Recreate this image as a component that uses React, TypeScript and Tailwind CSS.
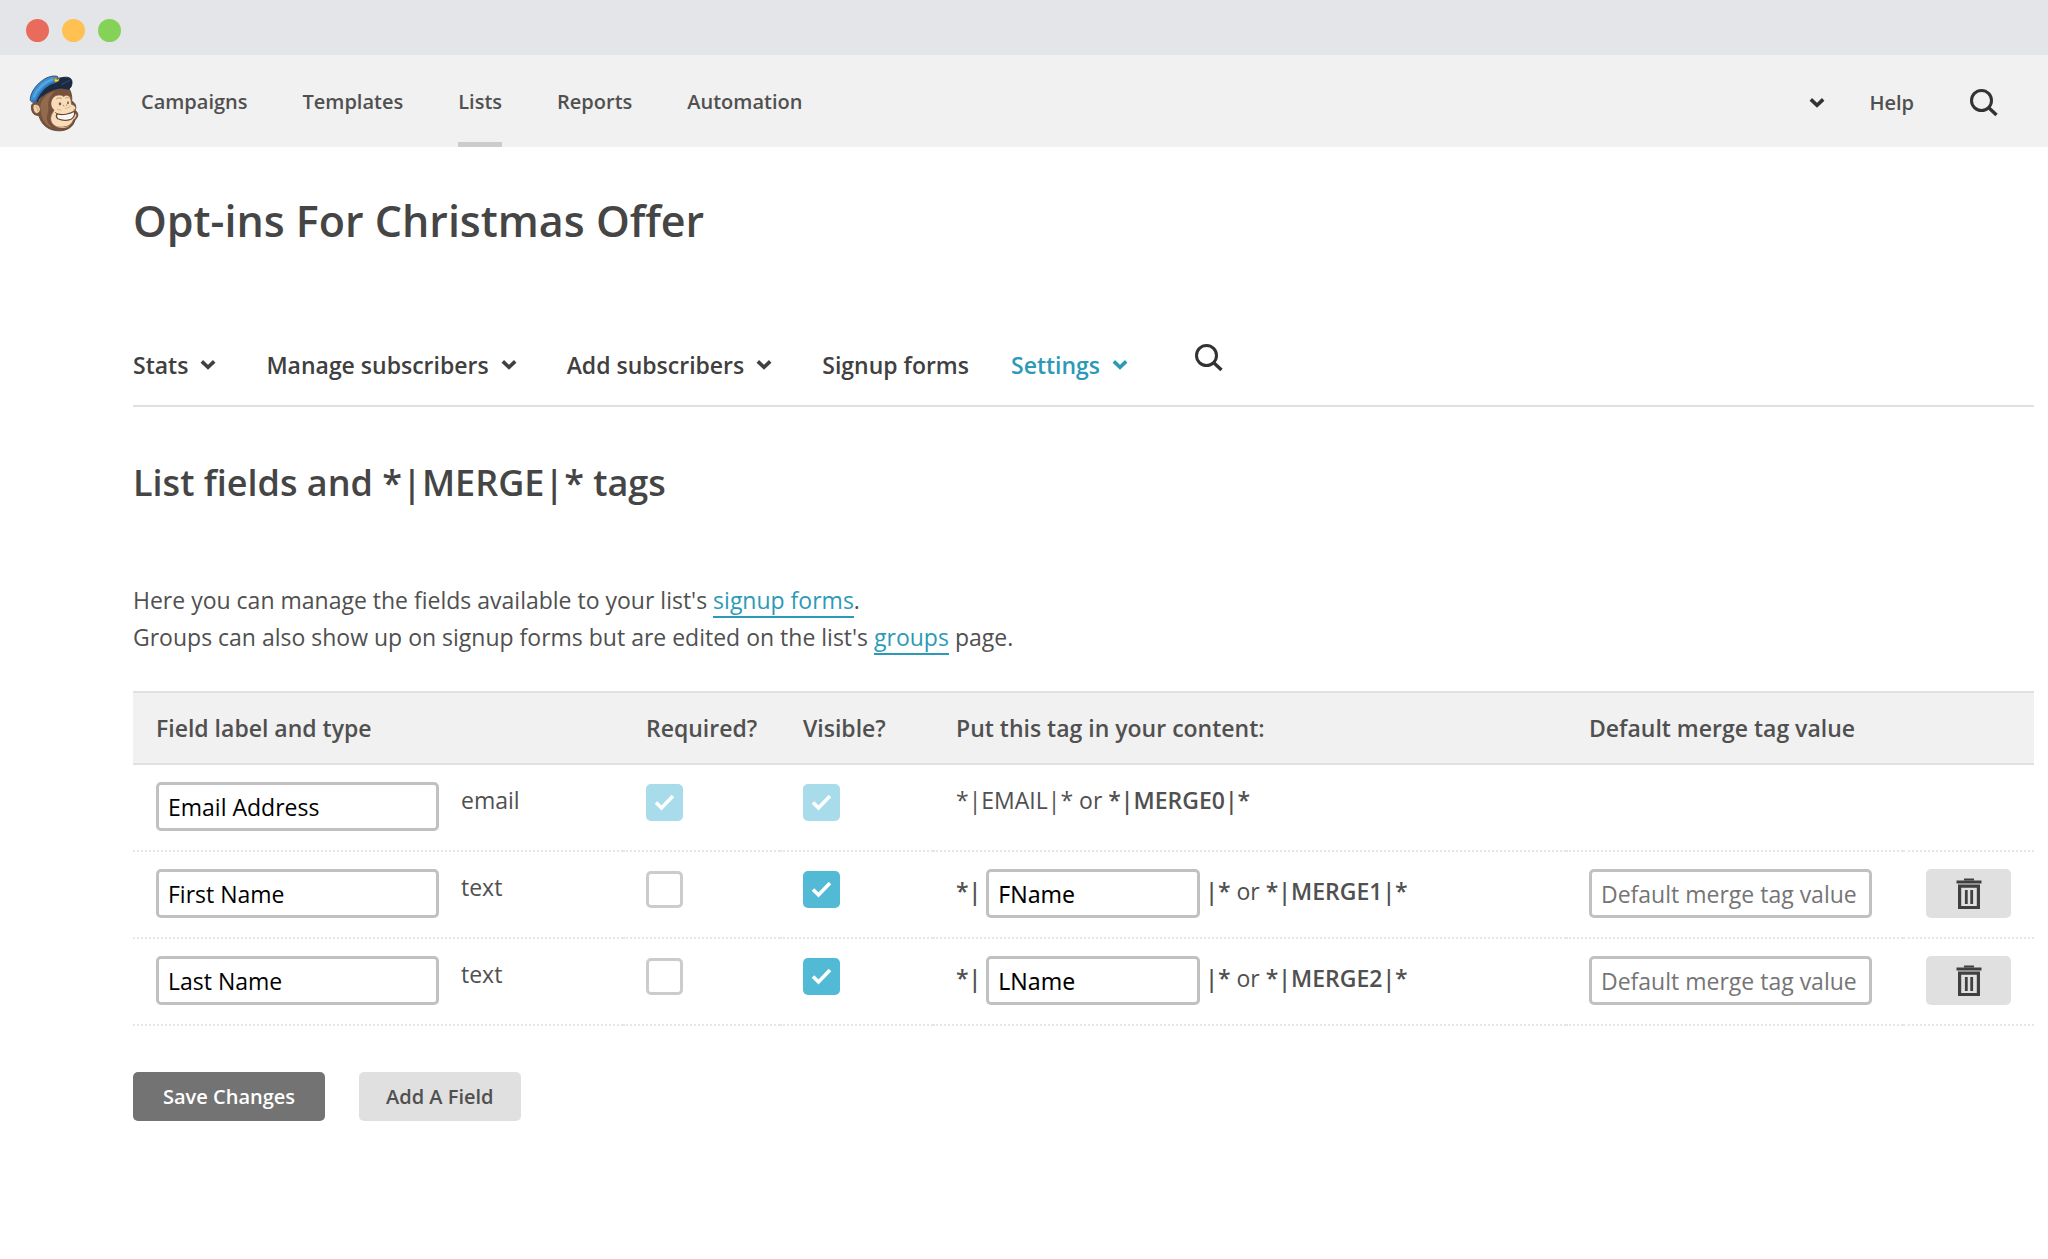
import React, { useState } from 'react';

type Field = {
  id: string;
  label: string;
  type: string;
  required: boolean;
  visible: boolean;
  locked: boolean;
  tag: string;
  merge: string;
};

const initialFields: Field[] = [
  { id: 'email', label: 'Email Address', type: 'email', required: true, visible: true, locked: true, tag: 'EMAIL', merge: 'MERGE0' },
  { id: 'fname', label: 'First Name', type: 'text', required: false, visible: true, locked: false, tag: 'FName', merge: 'MERGE1' },
  { id: 'lname', label: 'Last Name', type: 'text', required: false, visible: true, locked: false, tag: 'LName', merge: 'MERGE2' },
];

const mainLinks = ['Campaigns', 'Templates', 'Lists', 'Reports', 'Automation'];

const inputClass =
  'h-[49px] rounded-[5px] border-[3px] border-[#c1c1c1] bg-white px-[9px] text-[23px] leading-8 text-black outline-none placeholder:text-[#757575] placeholder:opacity-100 focus:border-[#52bad5]';

const Chevron = () => (
  <svg width="16" height="12" viewBox="0 0 16 12" fill="none" stroke="currentColor" strokeWidth="3.6" aria-hidden="true">
    <path d="M1.8 2.4 8 8.2l6.2-5.8" />
  </svg>
);

const SearchIcon = () => (
  <svg width="30" height="30" viewBox="0 0 30 30" fill="none" stroke="currentColor" strokeWidth="3" aria-hidden="true">
    <circle cx="12.5" cy="12.5" r="10" />
    <path d="m19.5 19.5 8 7.5" strokeWidth="3.4" />
  </svg>
);

const TrashIcon = () => (
  <svg width="26" height="32" viewBox="0 0 26 32" fill="none" stroke="#404040" aria-hidden="true">
    <path d="M8 1.5h10" strokeWidth="2" />
    <path d="M0.5 4h25" strokeWidth="3" />
    <path d="M3.6 8.2h18.8v21.3H3.6z" strokeWidth="3.2" />
    <path d="M10.3 12v14M15.7 12v14" strokeWidth="2.8" />
  </svg>
);

const Logo = () => (
  <svg width="50" height="57" viewBox="0 0 150 170" aria-hidden="true">
    {/* head */}
    <path
      d="M14 84C4 86 6 108 14 116c5 5 12 4 16 6 6 24 26 44 58 45 28 0 44-12 50-32 6-6 11-14 7-22-2-4-5-5-7-8 6-10 0-24-10-27C130 60 124 40 112 32L58 42 30 76z"
      fill="#75513e"
      stroke="#5a3f31"
      strokeWidth="2.5"
    />
    <path d="M34 90c4-20 20-36 44-42-16 14-22 30-20 48 2 14-6 24-4 38 2 10 8 18 16 24-22-8-36-28-36-68z" fill="#946a4c" />
    {/* ear */}
    <path d="M15 88c-6 4-3 22 5 26 6 3 12-2 14-10 1-10-10-20-19-16z" fill="#f1d3ad" stroke="#7b523a" strokeWidth="3" />
    <path d="M20 94c6 2 8 8 6 14" fill="none" stroke="#c79d73" strokeWidth="3" />
    {/* face */}
    <path
      d="M74 66c8-8 22-8 30-2 8-6 16-4 20 4 3 8 2 14 4 20 10 2 15 10 10 18-3 6-2 8 3 10 4 4-2 16-8 18-4 14-16 22-38 22-20 0-30-12-30-26 0-12 8-18 10-26-12-8-12-28-1-38z"
      fill="#f8ddb8"
      stroke="#7d5842"
      strokeWidth="2"
    />
    <path d="M76 148c10 10 34 10 46 2-8 12-38 12-46-2z" fill="#dcb68a" />
    {/* eyes and brows */}
    <path d="M82 72c5-5 12-5 16 0M109 70c4-4 9-4 12 0" fill="none" stroke="#cfa67c" strokeWidth="3.5" />
    <ellipse cx="93" cy="86" rx="4" ry="5" fill="#7d6254" />
    <ellipse cx="117" cy="83" rx="3" ry="4.5" fill="#7d6254" />
    <path d="M103 89l2 5M112 88l1 4" stroke="#8a6650" strokeWidth="2" />
    <path d="M84 100c4 4 8 5 13 4M108 100c6-1 12-3 18-8" fill="none" stroke="#dcb68a" strokeWidth="3" />
    {/* smile */}
    <path
      d="M84 116c16 5 38 1 52-8 3 9-1 20-10 24-12 5-30 3-40-1-4-4-5-10-2-15z"
      fill="#fff"
      stroke="#6a4735"
      strokeWidth="3.5"
    />
    <path d="M88 126c16 3 32 1 46-8" fill="none" stroke="#e2dad3" strokeWidth="1.5" />
    <path d="M79 112c4 1 6 4 5 8M134 104c4 0 6 3 7 6" fill="none" stroke="#6a4735" strokeWidth="3" />
    {/* cap */}
    <path d="M24 80C36 62 56 48 84 40c12-3 22 0 34 2 8-2 12-14 11-24-2-9-9-12-19-12-8 0-16 2-24 4L54 26 24 62z" fill="#1c2a44" stroke="#14203a" strokeWidth="2.5" />
    <path d="M4 76C2 62 14 34 40 16 56 4 74 0 86 4c2 6 2 10-2 14C58 26 36 44 22 78c-6 6-14 4-18-2z" fill="#3c8fd0" stroke="#1f3e66" strokeWidth="2.5" />
    <path d="M14 66C24 42 46 20 76 10" fill="none" stroke="#58a7e0" strokeWidth="6" />
    <path d="M9 76c4 2 7 2 11 0C34 44 56 26 84 19" fill="none" stroke="#2b74b5" strokeWidth="4" />
    <path d="M98 28c10-6 20-10 26-14" fill="none" stroke="#3b4d6d" strokeWidth="3" />
    <path d="M71 7l7 7 1-8 5 8 7-5-2 9-10 3z" fill="#ffd93b" stroke="#80691c" strokeWidth="1.5" />
  </svg>
);

type CheckboxProps = {
  label: string;
  checked: boolean;
  disabled: boolean;
  onChange: () => void;
};

const Checkbox = ({ label, checked, disabled, onChange }: CheckboxProps) => (
  <label className="relative mt-0.5 block size-[37px]">
    <input
      type="checkbox"
      aria-label={label}
      checked={checked}
      disabled={disabled}
      onChange={onChange}
      className="block size-full appearance-none rounded-[5px] border-[3px] border-[#cccccc] bg-white checked:border-0 checked:bg-[#52bad5] checked:disabled:bg-[#a8dcea]"
    />
    {checked && (
      <svg className="pointer-events-none absolute inset-0" width="37" height="37" viewBox="0 0 37 37" fill="none" stroke="#fff" strokeWidth="3.6" aria-hidden="true">
        <path d="M10 18.5 15.5 24 27 12" />
      </svg>
    )}
  </label>
);

const App = () => {
  const [fields, setFields] = useState(initialFields);

  const update = (id: string, patch: Partial<Field>) => {
    setFields(fields.map((f) => (f.id === id ? { ...f, ...patch } : f)));
  };

  const remove = (id: string) => {
    setFields(fields.filter((f) => f.id !== id));
  };

  return (
    <div className="min-h-screen bg-white font-['Open_Sans',sans-serif] text-[#454545]">
      <div className="flex h-[55px] items-center gap-[13px] bg-[#e3e5e9] px-[26px] pt-[5px]">
        <span className="size-[23px] rounded-full bg-[#e96b5b]"></span>
        <span className="size-[23px] rounded-full bg-[#ffc152]"></span>
        <span className="size-[23px] rounded-full bg-[#84d257]"></span>
      </div>

      <header className="flex h-[92px] items-center bg-[#f1f1f1] pl-[29px] pr-[49px]">
        <a href="#" aria-label="Home" className="pt-1">
          <Logo />
        </a>
        <nav className="ml-[62px] flex h-full gap-[55px] text-xl font-semibold text-[#505050]">
          {mainLinks.map((link) => (
            <a
              key={link}
              href="#"
              className={
                link === 'Lists'
                  ? 'flex items-center border-b-[5px] border-[#cccccc] pt-1.5'
                  : 'flex items-center border-b-[5px] border-transparent pt-1.5'
              }
            >
              {link}
            </a>
          ))}
        </nav>
        <div className="ml-auto flex items-center pt-1 text-xl font-semibold">
          <button type="button" aria-label="Account menu" className="mr-11 text-[#333333]">
            <Chevron />
          </button>
          <a href="#" className="mr-[55px] text-[#505050]">Help</a>
          <button type="button" aria-label="Search" className="text-[#333333]">
            <SearchIcon />
          </button>
        </div>
      </header>

      <main className="pl-[133px] pr-3.5">
        <h1 className="pt-[42px] text-[43px] leading-16 font-semibold text-[#454545]">Opt-ins For Christmas Offer</h1>

        <nav className="mt-[76px] flex h-[78px] items-start border-b-2 border-[#e0e0e0] pt-3.5 text-[23px] leading-8 font-semibold text-[#404040]">
          <div className="flex gap-[50px] pt-1.5">
            <a href="#" className="flex items-center gap-3">Stats <Chevron /></a>
            <a href="#" className="flex items-center gap-3">Manage subscribers <Chevron /></a>
            <a href="#" className="flex items-center gap-3">Add subscribers <Chevron /></a>
            <a href="#" className="-mr-2">Signup forms</a>
            <a href="#" className="flex items-center gap-3 text-[#2c9ab7]">Settings <Chevron /></a>
          </div>
          <button type="button" aria-label="Search list" className="ml-[66px] text-[#333333]">
            <SearchIcon />
          </button>
        </nav>

        <h2 className="pt-12 text-4xl leading-14 font-semibold">List fields and *|MERGE|* tags</h2>

        <p className="mt-[71px] text-[23px] leading-[37px] text-[#505050]">
          Here you can manage the fields available to your list's{' '}
          <a href="#" className="border-b-2 border-[#2c9ab7] text-[#2c9ab7]">signup forms</a>.
          <br />
          Groups can also show up on signup forms but are edited on the list's{' '}
          <a href="#" className="border-b-2 border-[#2c9ab7] text-[#2c9ab7]">groups</a> page.
        </p>

        <table className="mt-[35px] w-full table-fixed border-separate border-spacing-0 text-left text-[23px] leading-9 text-[#505050]">
          <thead>
            <tr className="bg-[#f1f1f1] *:h-[74px] *:border-y-2 *:border-[#e0e0e0] *:pl-[23px] *:font-semibold">
              <th scope="col" className="w-[490px]">Field label and type</th>
              <th scope="col" className="w-[157px]">Required?</th>
              <th scope="col" className="w-[153px]">Visible?</th>
              <th scope="col">Put this tag in your content:</th>
              <th scope="col" className="w-[337px]">Default merge tag value</th>
              <th scope="col" aria-label="Delete" className="w-[131px]"></th>
            </tr>
          </thead>
          <tbody>
            {fields.map((field) => (
              <tr key={field.id} className="*:h-[87px] *:border-b-2 *:border-dotted *:border-[#e6e6e6] *:pt-[17px] *:pl-[23px] *:align-top">
                <td>
                  <div className="flex items-start gap-[22px]">
                    <input
                      type="text"
                      aria-label="Field label"
                      value={field.label}
                      onChange={(e) => update(field.id, { label: e.target.value })}
                      className={`${inputClass} w-[283px]`}
                    />
                    <span>{field.type}</span>
                  </div>
                </td>
                <td>
                  <Checkbox
                    label={`${field.label} required`}
                    checked={field.required}
                    disabled={field.locked}
                    onChange={() => update(field.id, { required: !field.required })}
                  />
                </td>
                <td>
                  <Checkbox
                    label={`${field.label} visible`}
                    checked={field.visible}
                    disabled={field.locked}
                    onChange={() => update(field.id, { visible: !field.visible })}
                  />
                </td>
                <td>
                  {field.locked ? (
                    <span>
                      *|{field.tag}|* or <b className="font-semibold">*|{field.merge}|*</b>
                    </span>
                  ) : (
                    <div className="flex items-start gap-[5px] leading-11">
                      <b className="font-semibold">*|</b>
                      <input
                        type="text"
                        aria-label={`${field.label} tag`}
                        value={field.tag}
                        onChange={(e) => update(field.id, { tag: e.target.value })}
                        className={`${inputClass} w-[214px] font-['Noto_Sans',sans-serif]`}
                      />
                      <span>
                        <b className="font-semibold">|*</b> or <b className="font-semibold">*|{field.merge}|*</b>
                      </span>
                    </div>
                  )}
                </td>
                <td>
                  {!field.locked && (
                    <input
                      type="text"
                      aria-label={`${field.label} default value`}
                      placeholder="Default merge tag value"
                      className={`${inputClass} w-[283px]`}
                    />
                  )}
                </td>
                <td>
                  {!field.locked && (
                    <button
                      type="button"
                      aria-label={`Delete ${field.label}`}
                      onClick={() => remove(field.id)}
                      className="flex h-[49px] w-[85px] items-center justify-center rounded-[5px] bg-[#e0e0e0]"
                    >
                      <TrashIcon />
                    </button>
                  )}
                </td>
              </tr>
            ))}
          </tbody>
        </table>

        <div className="mt-[46px] flex gap-[34px] pb-10 text-xl font-semibold">
          <button type="button" className="h-[49px] rounded-[5px] bg-[#737373] px-[30px] text-white">
            Save Changes
          </button>
          <button type="button" className="h-[49px] rounded-[5px] bg-[#e0e0e0] px-[27px] text-[#505050]">
            Add A Field
          </button>
        </div>
      </main>
    </div>
  );
};

export default App;
